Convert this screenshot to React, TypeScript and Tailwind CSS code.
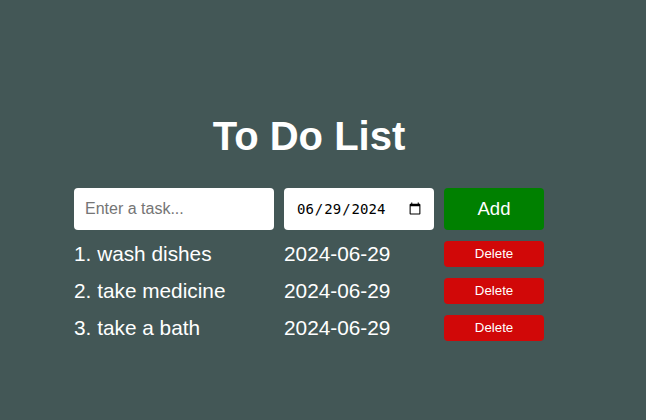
export default function App() {
  const tasks = [
    { id: 1, text: "wash dishes", date: "2024-06-29" },
    { id: 2, text: "take medicine", date: "2024-06-29" },
    { id: 3, text: "take a bath", date: "2024-06-29" },
  ]

  return (
    <div className="min-h-[420px] bg-[#435756] text-white font-['Liberation_Sans',Arial,sans-serif] pt-[112px]">
      <div className="w-[498px] mx-auto">
        <div className="w-[470px]">
          <h1 className="text-[40px] leading-[48px] font-bold text-center mb-[28px]">
            To Do List
          </h1>

          <div className="flex gap-[10px]">
            <input
              type="text"
              placeholder="Enter a task..."
              className="w-[200px] h-[42px] bg-white rounded-[4px] px-[11px] text-[16px] text-black placeholder:text-[#757575] outline-none"
            />
            <input
              type="date"
              defaultValue="2024-06-29"
              className="w-[150px] h-[42px] bg-white rounded-[4px] pl-[12px] pr-[10px] text-[14px] text-black font-['DejaVu_Sans_Mono',monospace] outline-none"
            />
            <button className="w-[100px] h-[42px] bg-[#008000] rounded-[4px] text-[18.5px] text-white">
              Add
            </button>
          </div>

          <div className="mt-[11px] flex flex-col gap-[11px]">
            {tasks.map((task, i) => (
              <div key={task.id} className="flex gap-[10px] items-center h-[26px]">
                <span className="w-[200px] text-[20.8px] leading-[26px] -mt-[1px]">
                  {i + 1}. {task.text}
                </span>
                <span className="w-[150px] text-[20.8px] leading-[26px] -mt-[1px]">{task.date}</span>
                <button className="w-[100px] h-[26px] bg-[#d10808] rounded-[4px] text-[13.3px] text-white">
                  Delete
                </button>
              </div>
            ))}
          </div>
        </div>
      </div>
    </div>
  )
}
